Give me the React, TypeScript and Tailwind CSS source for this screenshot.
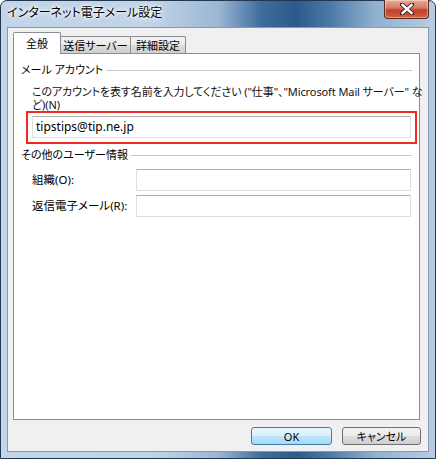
import React from "react";

function Tab({ label, selected, w }: { label: string; selected?: boolean; w: string }) {
  if (selected) {
    return (
      <div className={`relative z-10 -mb-px flex h-[22px] ${w} shrink-0 items-start justify-center whitespace-nowrap border border-b-0 border-[#898c95] bg-white pt-[3px] rounded-t-[2px]`}>
        {label}
      </div>
    );
  }
  return (
    <div className={`-ml-px flex h-[17px] ${w} shrink-0 items-center justify-center whitespace-nowrap border border-b-0 border-[#898c95] bg-[linear-gradient(#f3f3f3,#ebebeb_50%,#dddddd_50%,#cfcfcf)] leading-none first:ml-0 rounded-t-[2px]`}>
      {label}
    </div>
  );
}

function GroupHeader({ label }: { label: string }) {
  return (
    <div className="flex h-[14px] items-center gap-[3px]">
      <span className="whitespace-nowrap leading-[14px]">{label}</span>
      <div className="h-px flex-1 bg-[#c9c9c9]" />
    </div>
  );
}

function TextBox({ w, value }: { w: string; value?: string }) {
  return (
    <div
      className={`flex h-[22px] ${w} shrink-0 items-center border border-[#dbdfe6] border-t-[#abadb3] bg-white pl-[3px] text-[12px] leading-none`}
    >
      {value}
    </div>
  );
}

export default function App() {
  return (
    <div className="h-[459px] w-[436px] bg-white font-['Noto_Sans','Noto_Sans_CJK_JP',sans-serif] text-[11px] text-black [font-feature-settings:'palt']">
      <div className="flex h-[459px] w-[436px] flex-col rounded-t-[7px] border border-[#23384f] bg-[linear-gradient(90deg,#c3d5e8_0%,#c0d3e7_35%,#9bb7d4_50%,#3f6c9c_60%,#2c5a8d_68%,#4e7aa7_76%,#8fb0d0_86%,#b7cde3_100%)] px-[6px] pb-[6px]">
        {/* title bar */}
        <div className="flex h-[26px] items-start justify-between">
          <div className="mt-[5px] whitespace-nowrap text-[12px] leading-[14px] [text-shadow:0_0_6px_#fff,0_0_4px_#fff,0_0_2px_#fff]">
            インターネット電子メール設定
          </div>
          <div className="-mt-px flex h-[19px] w-[45px] items-center justify-center rounded-b-[4px] border border-t-0 border-[#5b2a22] bg-[linear-gradient(#e9a996,#d47a64_45%,#c2412b_55%,#d2603f)] shadow-[inset_0_0_1px_1px_rgba(255,255,255,0.4)]">
            <svg width="14" height="12" viewBox="0 0 14 12">
              <path d="M2 1.5 L12 10.5 M12 1.5 L2 10.5" stroke="#3a1f1a" strokeWidth="4.2" strokeLinecap="square" />
              <path d="M2.5 2 L11.5 10 M11.5 2 L2.5 10" stroke="#ffffff" strokeWidth="2.4" strokeLinecap="square" />
            </svg>
          </div>
        </div>

        {/* client area */}
        <div className="flex flex-1 flex-col border border-[#8799ad] bg-[#f0f0f0]">
          {/* tabs */}
          <div className="ml-[5px] mt-[4px] flex h-[21px] items-end">
            <Tab label="全般" selected w="w-[48px]" />
            <Tab label="送信サーバー" w="w-[71px]" />
            <Tab label="詳細設定" w="w-[56px]" />
          </div>

          {/* panel */}
          <div className="ml-[5px] flex h-[367px] w-[407px] flex-col border border-[#898c95] bg-white px-[7px]">
            <div className="mt-[9px]">
              <GroupHeader label="メール アカウント" />
            </div>
            <div className="ml-[11px] mt-[8px] whitespace-nowrap leading-[13px] tracking-[-0.1px] text-[#111]">
              このアカウントを表す名前を入力してください ("仕事"、"Microsoft Mail サーバー" な
              <br />
              ど)(N)
            </div>
            <div className="ml-[5px] h-[33px] w-[391px] shrink-0 border-2 border-[#ee2a24] pl-[4px] pt-[3px]">
              <TextBox w="w-[379px]" value="tipstips@tip.ne.jp" />
            </div>
            <div className="mt-[4px]">
              <GroupHeader label="その他のユーザー情報" />
            </div>
            <div className="ml-[11px] mt-[7px] flex items-center">
              <span className="w-[104px] shrink-0 whitespace-nowrap text-[11.5px]">組織(O):</span>
              <TextBox w="w-[275px]" />
            </div>
            <div className="ml-[11px] mt-[4px] flex items-center">
              <span className="w-[104px] shrink-0 whitespace-nowrap text-[11.5px]">返信電子メール(R):</span>
              <TextBox w="w-[275px]" />
            </div>
          </div>

          {/* buttons */}
          <div className="mr-[7px] mt-[7px] flex justify-end gap-[10px]">
            <div className="flex h-[18px] w-[81px] items-center justify-center rounded-[3px] border border-[#3c7fb1] bg-[linear-gradient(#eaf6fd,#d9f0fc_50%,#bee6fd_50%,#a7d9f5)] leading-none">
              OK
            </div>
            <div className="flex h-[18px] w-[79px] items-center justify-center rounded-[3px] border border-[#707070] bg-[linear-gradient(#f2f2f2,#ebebeb_50%,#dddddd_50%,#cfcfcf)] leading-none">
              キャンセル
            </div>
          </div>
        </div>
      </div>
    </div>
  );
}
